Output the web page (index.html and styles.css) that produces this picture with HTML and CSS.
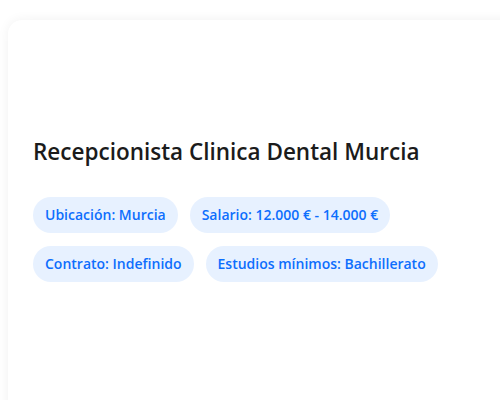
FILE: index.html
```html
<!DOCTYPE html>
<html lang="es">
<head>
<meta charset="utf-8">
<link rel="stylesheet" href="styles.css">
</head>
<body>
<div class="card">
  <div class="card-body">
    <h1 class="title">Recepcionista Clinica Dental Murcia</h1>
    <div class="tags">
      <span class="tag">Ubicación: Murcia</span>
      <span class="tag">Salario: 12.000 € - 14.000 €</span>
      <span class="tag">Contrato: Indefinido</span>
      <span class="tag">Estudios mínimos: Bachillerato</span>
    </div>
  </div>
</div>
</body>
</html>
```
FILE: styles.css
```css
html, body {
  margin: 0;
  padding: 0;
  background: #ffffff;
  overflow: hidden;
}
body {
  padding: 20px 0 0 8px;
  font-family: "Open Sans", "Noto Sans", sans-serif;
}
.card {
  width: 540px;
  height: 500px;
  background: #ffffff;
  border-radius: 14px;
  box-shadow: 0 0 12px rgba(0, 0, 0, 0.06);
}
.card-body {
  padding: 115px 25px 0 25px;
}
.title {
  margin: 0;
  font-size: 22.5px;
  font-weight: 600;
  color: #1b1b1b;
  line-height: 34px;
}
.tags {
  margin-top: 28px;
  display: flex;
  flex-wrap: wrap;
  gap: 13px 12px;
  width: 420px;
}
.tag {
  display: inline-block;
  padding: 8px 12px;
  font-size: 14px;
  line-height: 20px;
  color: #0d6efd;
  background: #e7f1ff;
  border-radius: 18px;
  font-weight: 600;
}
```
